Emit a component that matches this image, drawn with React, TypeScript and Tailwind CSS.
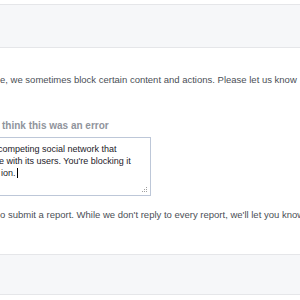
import React from "react";

export default function App() {
  return (
    <div className="w-[300px] h-[300px] overflow-hidden bg-white font-['Liberation_Sans',Arial,sans-serif] flex flex-col">
      <div className="h-[4px] shrink-0 bg-white" />
      <div className="h-[44px] shrink-0 bg-[#f6f7f9] border-t border-b border-[#e5e6e9]" />
      <p className="mt-[26px] text-[9.5px] leading-[12px] text-[#4b4f56] whitespace-nowrap">
        e, we sometimes block certain content and actions. Please let us know
      </p>
      <p className="mt-[34px] pl-[2px] font-bold text-[10px] leading-[12px] text-[#90949c] whitespace-nowrap">
        think this was an error
      </p>
      <div className="mt-[5px] ml-[-10px] w-[161px] h-[59px] shrink-0 border border-[#bdc7d8] relative pt-[5px] text-[9px] leading-[12px] text-[#1d2129] whitespace-nowrap">
        <div className="ml-[7px]">competing social network that</div>
        <div className="ml-[8px]">e with its users. You're blocking it</div>
        <div className="ml-[10px] flex items-center">
          ion.<span className="inline-block w-[1px] h-[10px] bg-black ml-[1px]" />
        </div>
        <svg className="absolute right-[2px] bottom-[2px]" width="6" height="6" viewBox="0 0 6 6">
          <rect x="4" y="0" width="1" height="1" fill="#a0a0a0" />
          <rect x="2" y="2" width="1" height="1" fill="#a0a0a0" />
          <rect x="4" y="2" width="1" height="1" fill="#a0a0a0" />
          <rect x="0" y="4" width="1" height="1" fill="#a0a0a0" />
          <rect x="2" y="4" width="1" height="1" fill="#a0a0a0" />
          <rect x="4" y="4" width="1" height="1" fill="#a0a0a0" />
        </svg>
      </div>
      <p className="mt-[13px] text-[9.5px] leading-[12px] text-[#4b4f56] whitespace-nowrap">
        o submit a report. While we don't reply to every report, we'll let you know
      </p>
      <div className="mt-[33px] h-[41px] shrink-0 bg-[#f6f7f9] border-t border-b border-[#e5e6e9]" />
    </div>
  );
}
